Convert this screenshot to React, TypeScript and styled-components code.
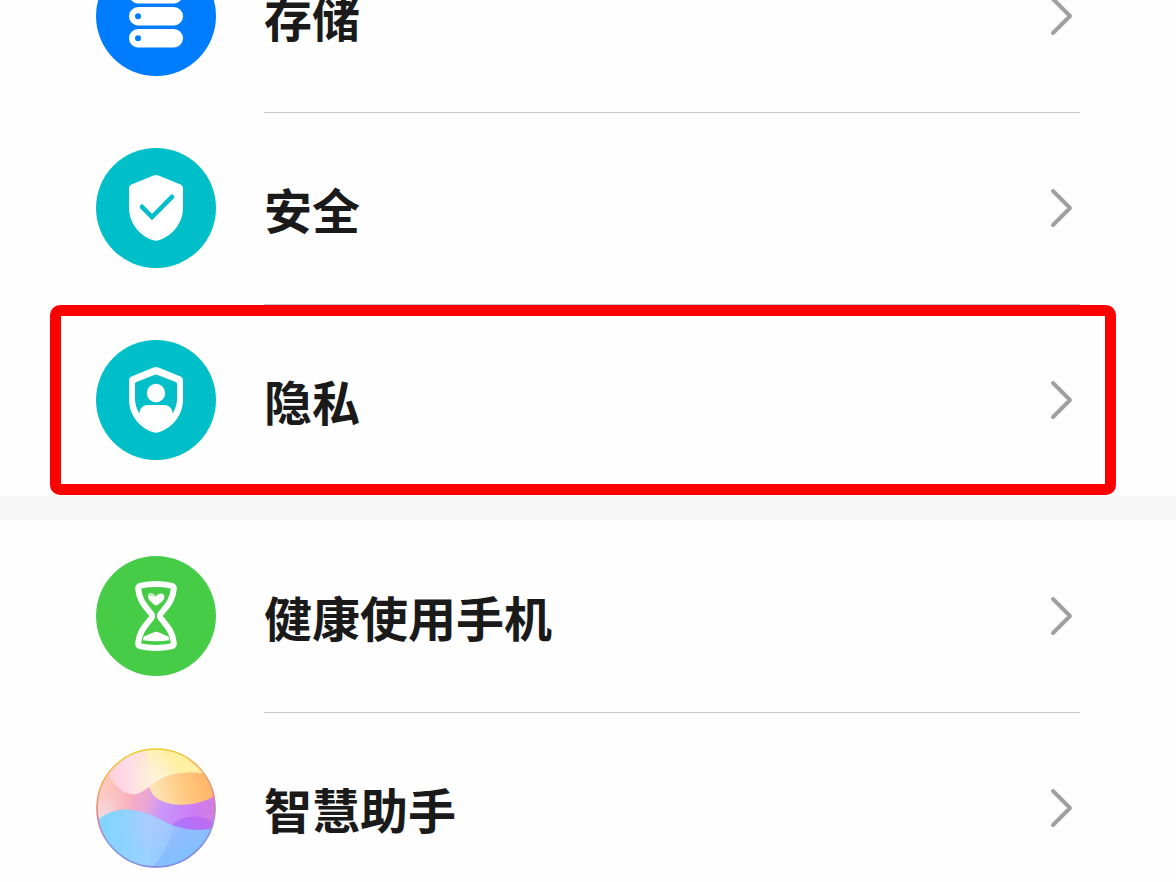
import React from "react";
import styled, { createGlobalStyle, css } from "styled-components";

const GlobalStyle = createGlobalStyle`
  *, *::before, *::after { box-sizing: border-box; }
  body {
    margin: 0;
    background: #fefefe;
    color: #1a1a1a;
    font-family: "Noto Sans CJK SC", "Noto Sans", sans-serif;
  }
`;

const Screen = styled.main`
  height: 100vh;
  overflow: hidden;
  display: flex;
  flex-direction: column;
`;

/* The list is scrolled, so its first row is partly above the window. */
const Scrolled = styled.div`
  display: flex;
  flex-direction: column;
  gap: 24px;
  margin-top: -80px;
  background: #f7f7f7;
`;

const Group = styled.ul`
  list-style: none;
  margin: 0;
  padding: 0;
  background: #fefefe;
`;

const Item = styled.li<{ $marked?: boolean }>`
  position: relative;
  padding: 0 96px;

  ${({ $marked }) =>
    $marked &&
    css`
      &::after {
        content: "";
        position: absolute;
        inset: 1px 60px 1px 50px;
        border: 11px solid #ff0000;
        border-radius: 10px;
        pointer-events: none;
      }
    `}
`;

const RowLink = styled.a`
  display: flex;
  align-items: center;
  gap: 48px;
  height: 192px;
  color: inherit;
  text-decoration: none;
`;

const RowBody = styled.span<{ $divided: boolean }>`
  flex: 1;
  align-self: stretch;
  display: flex;
  align-items: center;
  justify-content: space-between;
  box-shadow: ${({ $divided }) => ($divided ? "inset 0 1px #c8c8c8" : "none")};
`;

const Label = styled.span`
  font-size: 48px;
  font-weight: 700;
  line-height: 64px;
`;

const RoundIcon = styled.svg`
  flex: none;
  width: 120px;
  height: 120px;
  display: block;
`;

const Arrow = styled.svg`
  flex: none;
  width: 32px;
  height: 48px;
  fill: none;
  stroke: #a0a0a0;
  stroke-width: 4;
  stroke-linecap: round;
  stroke-linejoin: round;
`;

const SHIELD =
  "M57.5 27.6Q60 26.4 62.5 27.6L84.6 36.6Q87 37.8 87 40.4V59C87 77 75 88 63.5 92Q60 93.4 56.5 92C45 88 33 77 33 59V40.4Q33 37.8 35.4 36.6Z";

const StorageIcon = () => (
  <RoundIcon viewBox="0 0 120 120" aria-hidden="true">
    <circle cx="60" cy="60" r="60" fill="#007dff" />
    {[29, 51, 73].map((y) => (
      <g key={y}>
        <rect x="33" y={y} width="54" height="18.4" rx="9.2" fill="#fff" />
        <circle cx="42" cy={y + 9.2} r="3" fill="#007dff" />
      </g>
    ))}
  </RoundIcon>
);

const SecurityIcon = () => (
  <RoundIcon viewBox="0 0 120 120" aria-hidden="true">
    <circle cx="60" cy="60" r="60" fill="#00bfc9" />
    <path d={SHIELD} fill="#fff" />
    <path
      d="M46 58.8L56 69L76 48.8"
      fill="none"
      stroke="#00bfc9"
      strokeWidth="4.6"
      strokeLinecap="round"
    />
  </RoundIcon>
);

const PrivacyIcon = () => (
  <RoundIcon viewBox="0 0 120 120" aria-hidden="true">
    <circle cx="60" cy="60" r="60" fill="#00bfc9" />
    <path d={SHIELD} fill="#fff" />
    <path
      d="M59 34.7Q60 34.3 61 34.7L79.6 42Q81 42.6 81 44V59C81 64 79.3 69 76.6 73.4C76 68 73 65 68 65H52C47 65 44 68 43.4 73.4C40.7 69 39 64 39 59V44Q39 42.6 40.4 42Z"
      fill="#00bfc9"
    />
    <circle cx="60" cy="53" r="9.2" fill="#fff" />
  </RoundIcon>
);

const BalanceIcon = () => (
  <RoundIcon viewBox="0 0 120 120" aria-hidden="true">
    <circle cx="60" cy="60" r="60" fill="#47cc47" />
    <path
      d="M44.8 29.6Q60 26.6 75.2 29.6Q78 30.2 77.8 32.7C77 44.5 70 51 64.6 58Q63.4 60 64.6 62C70 69 77 75.5 77.8 87.3Q78 89.8 75.2 90.4Q60 93.4 44.8 90.4Q42 89.8 42.2 87.3C43 75.5 50 69 55.4 62Q56.6 60 55.4 58C50 51 43 44.5 42.2 32.7Q42 30.2 44.8 29.6Z"
      fill="none"
      stroke="#fff"
      strokeWidth="6"
      strokeLinejoin="round"
    />
    <path
      d="M60.2 40.2C62 37.2 66 36.6 67.6 38.4C69 40.2 68.6 42.6 67 44.4L62.2 48.8Q60.2 50.2 58.2 48.8L53.6 44.6Q52.2 43 52 40.2C55 38.8 57.4 41 60.2 40.2Z"
      fill="#fff"
    />
    <path
      d="M52 40.2C51.6 38 53.2 36.8 55.2 37C57.6 37.4 58.8 39 60.2 40.2C57.4 41 55 38.8 52 40.2Z"
      fill="#fff"
      opacity="0.65"
    />
    <path
      d="M48 80.6L58.6 76Q60.2 75.4 61.8 76L72.2 80.6Q73.6 81.8 73.2 84.2Q60 86.4 47 84.2Q46.8 81.8 48 80.6Z"
      fill="#fff"
    />
  </RoundIcon>
);

const AssistantIcon = () => (
  <RoundIcon viewBox="30 30 360 360" aria-hidden="true">
    <defs>
      <clipPath id="ball">
        <circle cx="210" cy="210" r="178" />
      </clipPath>
      <linearGradient id="base" x1="55" y1="150" x2="375" y2="250" gradientUnits="userSpaceOnUse">
        <stop offset="0" stopColor="#ffc9ba" />
        <stop offset="0.22" stopColor="#fcb0bb" />
        <stop offset="0.4" stopColor="#eaa5d6" />
        <stop offset="0.56" stopColor="#c696fa" />
        <stop offset="0.8" stopColor="#cc7df6" />
        <stop offset="1" stopColor="#d27ce0" />
      </linearGradient>
      <radialGradient id="edgeGlow" cx="50" cy="230" r="100" gradientUnits="userSpaceOnUse">
        <stop offset="0" stopColor="#f5dcdd" />
        <stop offset="1" stopColor="#f5c4cc" stopOpacity="0" />
      </radialGradient>
      <linearGradient id="top" x1="70" y1="90" x2="250" y2="70" gradientUnits="userSpaceOnUse">
        <stop offset="0" stopColor="#ffd0de" />
        <stop offset="0.35" stopColor="#ffdde6" />
        <stop offset="0.62" stopColor="#ffe4d2" />
        <stop offset="0.68" stopColor="#fff0bd" />
        <stop offset="1" stopColor="#fff0a2" />
      </linearGradient>
      <radialGradient id="topGlow" cx="205" cy="125" r="85" gradientUnits="userSpaceOnUse">
        <stop offset="0" stopColor="#fff2e2" stopOpacity="0.9" />
        <stop offset="1" stopColor="#fff2e2" stopOpacity="0" />
      </radialGradient>
      <linearGradient id="orange" x1="350" y1="130" x2="205" y2="165" gradientUnits="userSpaceOnUse">
        <stop offset="0" stopColor="#ffb96c" />
        <stop offset="0.5" stopColor="#ffcd88" />
        <stop offset="1" stopColor="#ffe4b6" />
      </linearGradient>
      <linearGradient id="purple" x1="345" y1="232" x2="310" y2="285" gradientUnits="userSpaceOnUse">
        <stop offset="0" stopColor="#b865f0" />
        <stop offset="1" stopColor="#a873ff" />
      </linearGradient>
      <linearGradient id="blue" x1="60" y1="290" x2="340" y2="300" gradientUnits="userSpaceOnUse">
        <stop offset="0" stopColor="#83d5ff" />
        <stop offset="0.45" stopColor="#9bd0ff" />
        <stop offset="1" stopColor="#8fb9ff" />
      </linearGradient>
      <radialGradient id="blueGlow" cx="200" cy="255" r="90" gradientUnits="userSpaceOnUse">
        <stop offset="0" stopColor="#b4c8ff" stopOpacity="0.7" />
        <stop offset="1" stopColor="#b4c8ff" stopOpacity="0" />
      </radialGradient>
      <linearGradient id="deepBlue" x1="250" y1="270" x2="310" y2="370" gradientUnits="userSpaceOnUse">
        <stop offset="0" stopColor="#96bbff" />
        <stop offset="1" stopColor="#7fc0ff" />
      </linearGradient>
      <linearGradient id="rim" x1="180" y1="30" x2="240" y2="390" gradientUnits="userSpaceOnUse">
        <stop offset="0" stopColor="#efd22c" />
        <stop offset="0.25" stopColor="#f3ac62" />
        <stop offset="0.5" stopColor="#e0829c" />
        <stop offset="0.72" stopColor="#8b9be8" />
        <stop offset="1" stopColor="#8482e2" />
      </linearGradient>
    </defs>
    <g clipPath="url(#ball)">
      <rect x="30" y="30" width="360" height="360" fill="url(#base)" />
      <rect x="30" y="130" width="130" height="200" fill="url(#edgeGlow)" />
      <path
        d="M60 25H395V120C335 94 245 98 190 146C170 160 155 170 138 169C105 166 85 140 70 112Z"
        fill="url(#top)"
      />
      <path
        d="M60 25H395V120C335 94 245 98 190 146C170 160 155 170 138 169C105 166 85 140 70 112Z"
        fill="url(#topGlow)"
      />
      <path
        d="M190 146C245 98 335 94 395 118V168C350 198 310 201 280 200C230 198 196 178 190 146Z"
        fill="url(#orange)"
      />
      <path d="M258 262C290 228 350 226 395 262V300H280Z" fill="url(#purple)" opacity="0.8" />
      <path
        d="M25 255C60 222 95 213 130 215C195 220 225 250 275 267C315 279 350 278 395 270V395H25Z"
        fill="url(#blue)"
      />
      <path d="M262 263C315 281 350 278 395 270V395H190C230 360 252 310 262 263Z" fill="url(#deepBlue)" />
      <path
        d="M25 255C60 222 95 213 130 215C195 220 225 250 275 267C315 279 350 278 395 270V395H25Z"
        fill="url(#blueGlow)"
      />
    </g>
    <circle cx="210" cy="210" r="177" fill="none" stroke="url(#rim)" strokeWidth="5" />
  </RoundIcon>
);

type Entry = { label: string; Icon: React.FC; marked?: boolean };

const groups: Entry[][] = [
  [
    { label: "存储", Icon: StorageIcon },
    { label: "安全", Icon: SecurityIcon },
    { label: "隐私", Icon: PrivacyIcon, marked: true },
  ],
  [
    { label: "健康使用手机", Icon: BalanceIcon },
    { label: "智慧助手", Icon: AssistantIcon },
  ],
];

export default function App() {
  return (
    <>
      <GlobalStyle />
      <Screen>
        <Scrolled>
          {groups.map((entries, g) => (
            <Group key={g}>
              {entries.map(({ label, Icon, marked }, i) => (
                <Item key={label} $marked={marked}>
                  <RowLink href="#">
                    <Icon />
                    <RowBody $divided={i > 0}>
                      <Label>{label}</Label>
                      <Arrow viewBox="0 0 32 48" aria-hidden="true">
                        <path d="M5 7L22 24L5 41" />
                      </Arrow>
                    </RowBody>
                  </RowLink>
                </Item>
              ))}
            </Group>
          ))}
        </Scrolled>
      </Screen>
    </>
  );
}
